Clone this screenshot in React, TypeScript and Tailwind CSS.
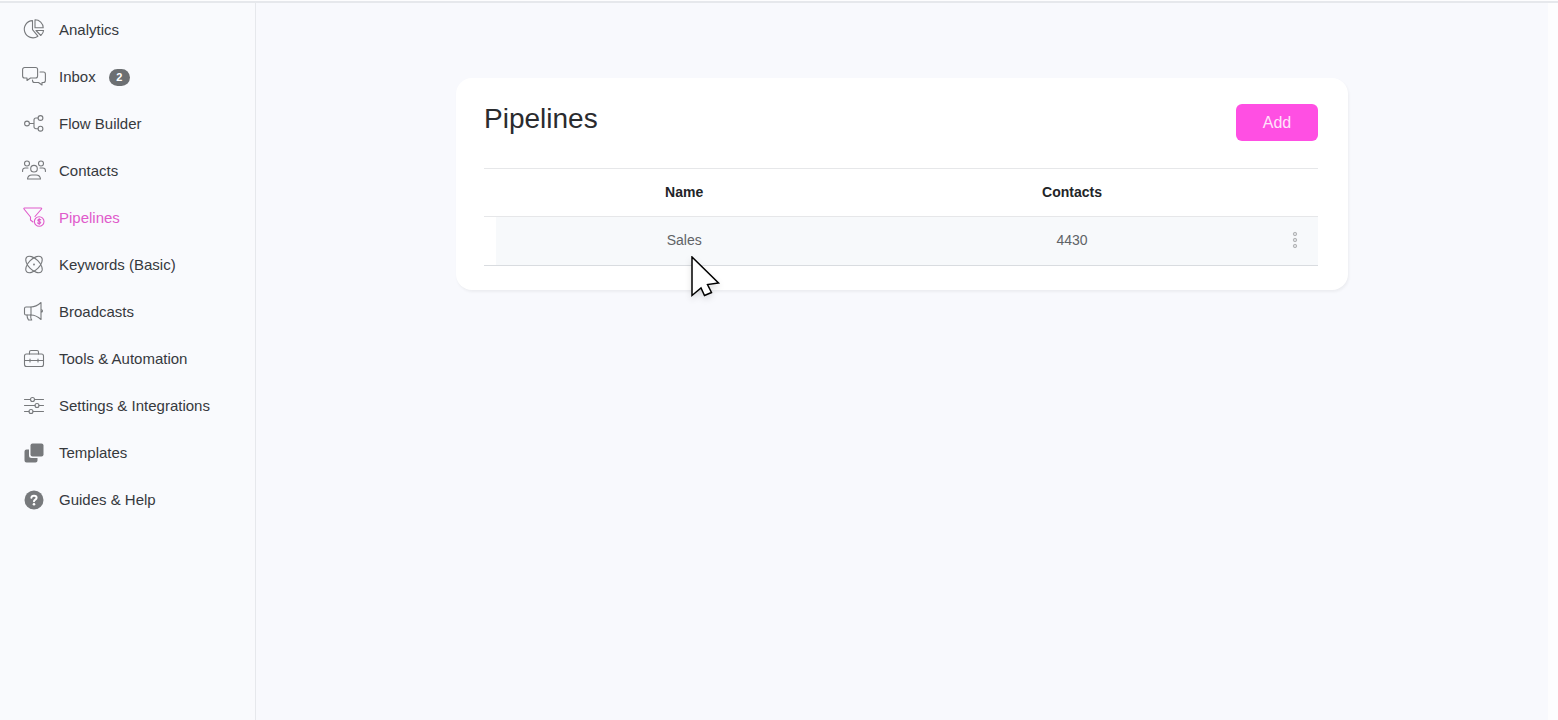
import type { ReactNode } from "react";

type NavItem = {
  label: string;
  icon: ReactNode;
  badge?: number;
  active?: boolean;
};

function Icon({ children }: { children: ReactNode }) {
  return (
    <svg
      viewBox="0 0 24 24"
      className="size-6 shrink-0 -translate-y-0.5"
      fill="none"
      stroke="currentColor"
      strokeWidth="1.1"
      strokeLinecap="round"
      strokeLinejoin="round"
      aria-hidden="true"
    >
      {children}
    </svg>
  );
}

const navItems: NavItem[] = [
  {
    label: "Analytics",
    icon: (
      <Icon>
        <path d="M10.5 3.6a8.6 8.6 0 1 0 5.4 15.6l-5.4-6.6z" />
        <path d="M13 2.8v8h8.2a8.2 8.2 0 0 0-8.2-8z" />
        <path d="M14 13.5h7.6a8 8 0 0 1-2.8 5z" />
      </Icon>
    ),
  },
  {
    label: "Inbox",
    badge: 2,
    icon: (
      <Icon>
        <path d="M2.6 3.5h11a2 2 0 0 1 2 2V12a2 2 0 0 1-2 2H8.5L5 16.5V14H2.6a2 2 0 0 1-2-2V5.500a2 2 0 0 1 2-2z" />
        <path d="M18 8h3.400a2 2 0 0 1 2 2v6.500a2 2 0 0 1-2 2h-1.400V21l-3.500-2.500h-4a2 2 0 0 1-2-2V16" />
      </Icon>
    ),
  },
  {
    label: "Flow Builder",
    icon: (
      <Icon>
        <circle cx="5" cy="12.5" r="2.4" />
        <circle cx="18.5" cy="7" r="2.4" />
        <circle cx="18.5" cy="17.7" r="2.4" />
        <path d="M7.5 12.5H12M16 7h-2a2 2 0 0 0-2 2v6.700a2 2 0 0 0 2 2h2" />
      </Icon>
    ),
  },
  {
    label: "Contacts",
    icon: (
      <Icon>
        <circle cx="5" cy="5.5" r="2.500" />
        <circle cx="19" cy="5.5" r="2.500" />
        <circle cx="12" cy="10.700" r="3.300" />
        <path d="M.6 13.500V12.500a2.500 2.500 0 0 1 2.500-2.500H6M23.400 13.500V12.500a2.500 2.500 0 0 0-2.500-2.500H18" />
        <path d="M5.500 21a4.500 4.500 0 0 1 4.500-4h4a4.500 4.500 0 0 1 4.500 4z" />
      </Icon>
    ),
  },
  {
    label: "Pipelines",
    active: true,
    icon: (
      <Icon>
        <path d="M13 11.500l6.500-7.500a.6.6 0 0 0-.5-1H2.500a.6.6 0 0 0-.5 1L8.500 12v3l2.500 2" />
        <circle cx="17.2" cy="16.500" r="4.800" />
        <path d="M18.800 14.800c-.6-.8-3-.7-3 .5 0 1.400 3 .9 3 2.300 0 1.200-2.600 1.200-3.200.3M17.200 13.600v5.800" />
      </Icon>
    ),
  },
  {
    label: "Keywords (Basic)",
    icon: (
      <Icon>
        <ellipse cx="12" cy="12.5" rx="10.300" ry="5.400" transform="rotate(45 12 12.5)" />
        <ellipse cx="12" cy="12.5" rx="10.300" ry="5.400" transform="rotate(-45 12 12.5)" />
        <circle cx="12" cy="12.5" r=".4" />
      </Icon>
    ),
  },
  {
    label: "Broadcasts",
    icon: (
      <Icon>
        <path d="M9 8H4a1.500 1.500 0 0 0-1.500 1.500v5A1.500 1.500 0 0 0 4 16h5z" />
        <path d="M9 8c4 0 7-1.800 10-4.500v17C16 17.800 13 16 9 16M19 10.500c2 .4 2 2.600 0 3" />
        <path d="M5 16c0 2 .5 3.500 1.500 5h3.200C8.700 19.500 8.500 18 8.800 16" />
      </Icon>
    ),
  },
  {
    label: "Tools & Automation",
    icon: (
      <Icon>
        <rect x="2.500" y="8" width="19" height="12.500" rx="2" />
        <path d="M7.500 8V6A1.500 1.500 0 0 1 9 4.500h6A1.500 1.500 0 0 1 16.500 6v2M2.500 14.500h19M8 13v3M16 13v3" />
      </Icon>
    ),
  },
  {
    label: "Settings & Integrations",
    icon: (
      <Icon>
        <path d="M2.500 6.500h6M12.500 6.500h9M2.500 12.500H13M17 12.500h4.500M2.500 18.500H7M11 18.500h10.500" />
        <circle cx="10.500" cy="6.500" r="2" />
        <circle cx="15" cy="12.500" r="2" />
        <circle cx="9" cy="18.500" r="2" />
      </Icon>
    ),
  },
  {
    label: "Templates",
    icon: (
      <Icon>
        <g fill="currentColor" stroke="none">
          <rect x="8.500" y="3.500" width="13" height="13" rx="2" />
          <path d="M7 9.500H4.500a2 2 0 0 0-2 2v9a2 2 0 0 0 2 2h9a2 2 0 0 0 2-2V18h-6A2.500 2.500 0 0 1 7 15.500z" />
        </g>
      </Icon>
    ),
  },
  {
    label: "Guides & Help",
    icon: (
      <Icon>
        <circle cx="12" cy="13" r="9.500" fill="currentColor" stroke="none" />
        <path d="M9.400 10.800c.2-3 5.200-2.700 5.200 0 0 1.800-2.600 1.700-2.600 3.400" stroke="#fff" strokeWidth="2" />
        <circle cx="12" cy="17.300" r="1.300" fill="#fff" stroke="none" />
      </Icon>
    ),
  },
];

const pipelines = [{ name: "Sales", contacts: 4430 }];

function Sidebar() {
  return (
    <nav className="w-64 shrink-0 border-r border-[#e6e8ec] bg-[#f9fafd] pt-1">
      <ul>
        {navItems.map((item) => (
          <li key={item.label}>
            <a
              href="#"
              className={`flex h-[47px] items-center gap-[13px] pl-[22px] text-[15px] ${
                item.active ? "text-[#e05bcb]" : "text-[#36393d]"
              }`}
            >
              <span className={item.active ? "text-[#e05bcb]" : "text-[#77797c]"}>
                {item.icon}
              </span>
              {item.label}
              {item.badge && (
                <span className="flex h-[17px] w-[21px] items-center justify-center rounded-full bg-[#6c6f72] text-[11px] font-bold text-white">
                  {item.badge}
                </span>
              )}
            </a>
          </li>
        ))}
      </ul>
    </nav>
  );
}

function Cursor() {
  return (
    <svg
      viewBox="0 0 30 42"
      className="pointer-events-none absolute top-6 left-6 h-[42px] w-[30px] drop-shadow-md"
      aria-hidden="true"
    >
      <path
        d="M1 1v38.500l9-7.500 3.500 7.500 7-3-4-8L27.500 27z"
        fill="#fff"
        stroke="#000"
        strokeWidth="1.500"
      />
    </svg>
  );
}

function PipelinesCard() {
  return (
    <section className="w-full max-w-[892px] rounded-2xl bg-white pt-[26px] pr-[30px] pb-6 pl-7 shadow-[1px_2px_3px_rgba(0,0,0,0.05)]">
      <div className="flex h-16 items-start justify-between">
        <h1 className="text-[28px] leading-[30px] text-[#2a2b2e]">Pipelines</h1>
        <button
          type="button"
          className="h-[37px] w-[82px] rounded-md bg-[#ff4fe3] text-base text-[#ffe4fb]"
        >
          Add
        </button>
      </div>
      <table className="w-full table-fixed text-center text-[14px]">
        <thead>
          <tr className="h-12 border-y border-[#e6e7e9] text-[#222427]">
            <th className="w-[48%]">Name</th>
            <th>Contacts</th>
            <th className="w-[7%]" aria-label="Actions" />
          </tr>
        </thead>
        <tbody>
          {pipelines.map((pipeline) => (
            <tr key={pipeline.name} className="h-[49px] border-b border-[#d9dce0] text-[#606366]">
              <td className="bg-[linear-gradient(to_right,transparent_12px,#f7f9fb_12px)] pb-0.5">
                <span className="relative">
                  {pipeline.name}
                  <Cursor />
                </span>
              </td>
              <td className="bg-[#f7f9fb] pb-0.5">{pipeline.contacts}</td>
              <td className="bg-[#f7f9fb] pb-0.5 pl-3">
                <button type="button" aria-label="Pipeline menu" className="block mx-auto text-[#b4b6b8]">
                  <svg viewBox="0 0 6 18" className="h-[18px] w-1.5" fill="#dcdee0" stroke="currentColor">
                    <circle cx="3" cy="3" r="1.700" />
                    <circle cx="3" cy="9" r="1.700" />
                    <circle cx="3" cy="15" r="1.700" />
                  </svg>
                </button>
              </td>
            </tr>
          ))}
        </tbody>
      </table>
    </section>
  );
}

export default function App() {
  return (
    <div className="flex min-h-screen flex-col bg-[#fdfdfe] pt-px font-['Liberation_Sans',Arial,sans-serif]">
      <div className="h-0.5 bg-[#e6e8ec]" />
      <div className="flex flex-1">
        <Sidebar />
        <main className="mr-2.5 flex flex-1 items-start justify-center bg-[#f8f9fd] px-6 pt-[75px]">
          <PipelinesCard />
        </main>
      </div>
    </div>
  );
}
